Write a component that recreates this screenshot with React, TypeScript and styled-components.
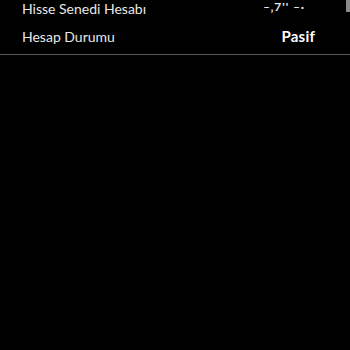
import React from "react";
import styled, { createGlobalStyle } from "styled-components";

const Global = createGlobalStyle`
  html, body { margin: 0; padding: 0; background: #000; }
  body { font-family: "Lato", "Noto Sans", sans-serif; }
`;

const Screen = styled.div`
  position: relative;
  width: 350px;
  height: 350px;
  background: #000;
  overflow: hidden;
`;

const List = styled.div`
  display: flex;
  flex-direction: column;
  margin-top: -6px;
  padding-bottom: 4px;
  border-bottom: 1px solid #5a5a5a;
`;

const Row = styled.div`
  display: flex;
  align-items: center;
  justify-content: space-between;
  height: 28px;
  padding: 0 35px 0 22px;
`;

const Label = styled.span`
  font-size: 14px;
  color: #e8e8e8;
`;

const Value = styled.span`
  font-size: 15px;
  color: #ffffff;
  font-weight: 700;
  letter-spacing: 0.2px;
`;

const Masked = styled.span`
  font-size: 12px;
  font-weight: 700;
  color: #e6e6e6;
  letter-spacing: 1px;
  margin-right: 10px;
  margin-top: -3px;
`;

const Thumb = styled.div`
  position: absolute;
  top: 0;
  right: 0;
  width: 4px;
  height: 12px;
  background: #8a8a8a;
`;

export default function App() {
  return (
    <>
      <Global />
      <Screen>
        <List>
          <Row>
            <Label>Hisse Senedi Hesabı</Label>
            <Masked>‒‚7'' ‒·</Masked>
          </Row>
          <Row>
            <Label>Hesap Durumu</Label>
            <Value>Pasif</Value>
          </Row>
        </List>
        <Thumb />
      </Screen>
    </>
  );
}
